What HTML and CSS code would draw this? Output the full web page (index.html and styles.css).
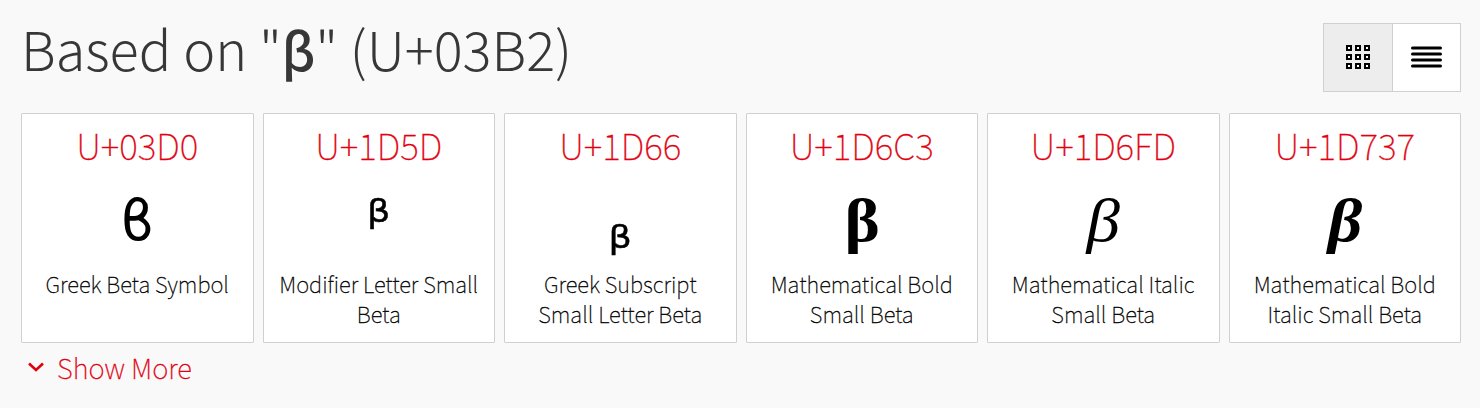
FILE: index.html
```html
<!doctype html>
<html lang="en">
<head>
<meta charset="utf-8">
<title>Based on "β" (U+03B2)</title>
  <link rel="stylesheet" href="styles.css">
</head>
<body>
  <section class="related">
    <header class="related-header">
      <h2>Based on "<b>β</b>" (U+03B2)</h2>
      <div class="view-switch">
        <a class="view active" href="#" aria-label="Grid">
          <svg width="24" height="24" viewBox="0 0 24 24" shape-rendering="crispEdges">
            <g fill="#fff" stroke="#000" stroke-width="2">
              <rect x="1" y="1" width="4" height="4"/>
              <rect x="10" y="1" width="4" height="4"/>
              <rect x="19" y="1" width="4" height="4"/>
              <rect x="1" y="10" width="4" height="4"/>
              <rect x="10" y="10" width="4" height="4"/>
              <rect x="19" y="10" width="4" height="4"/>
              <rect x="1" y="19" width="4" height="4"/>
              <rect x="10" y="19" width="4" height="4"/>
              <rect x="19" y="19" width="4" height="4"/>
            </g>
          </svg>
        </a>
        <a class="view" href="#" aria-label="List">
          <svg width="31" height="24" viewBox="0 0 31 24">
            <path d="M1.500 3h28M1.500 9h28M1.500 15h28M1.500 21h28" stroke="#000" stroke-width="3" stroke-linecap="round"/>
          </svg>
        </a>
      </div>
    </header>
    <ul class="cards">
      <li class="card">
        <a class="code" href="#">U+03D0</a>
        <span class="glyph">ϐ</span>
        <span class="name">Greek Beta Symbol</span>
      </li>
      <li class="card">
        <a class="code" href="#">U+1D5D</a>
        <span class="glyph small">ᵝ</span>
        <span class="name">Modifier Letter Small Beta</span>
      </li>
      <li class="card">
        <a class="code" href="#">U+1D66</a>
        <span class="glyph small sub">ᵦ</span>
        <span class="name">Greek Subscript Small Letter Beta</span>
      </li>
      <li class="card">
        <a class="code" href="#">U+1D6C3</a>
        <span class="glyph math bold">β</span>
        <span class="name">Mathematical Bold Small Beta</span>
      </li>
      <li class="card">
        <a class="code" href="#">U+1D6FD</a>
        <span class="glyph math italic">β</span>
        <span class="name">Mathematical Italic Small Beta</span>
      </li>
      <li class="card">
        <a class="code" href="#">U+1D737</a>
        <span class="glyph math bold italic">β</span>
        <span class="name">Mathematical Bold Italic Small Beta</span>
      </li>
    </ul>
    <a class="more" href="#">
      <svg width="16" height="10" viewBox="0 0 16 10">
        <path d="M1 1.500L8 8l7-6.500" fill="none" stroke="#e1000f" stroke-width="2.600"/>
      </svg>
      Show More
    </a>
  </section>
</body>
</html>
```
FILE: styles.css
```css
body {
  margin: 0;
  background: #f9f9f9;
  color: #000;
  font-family: 'Noto Sans CJK SC', 'Open Sans', sans-serif;
  font-weight: 100;
}
a {
  color: #e1000f;
  text-decoration: none;
}
.related {
  padding: 23px 19px 0 21px;
}
.related-header {
  display: flex;
  justify-content: space-between;
  height: 90px;
}
h2 {
  margin: 0;
  color: #373737;
  font-size: 54px;
  font-weight: 300;
  line-height: 50px;
  white-space: nowrap;
}
h2 b {
  font-size: 52px;
  font-weight: 500;
  line-height: 1;
}
.view-switch {
  display: flex;
  box-sizing: border-box;
  width: 138px;
  height: 69px;
  border: 1px solid #d0d0d0;
}
.view {
  display: flex;
  flex: 1;
  align-items: center;
  justify-content: center;
  padding-bottom: 2px;
  background: #fff;
}
.view.active {
  background: #ededed;
  border-right: 1px solid #d0d0d0;
}
.cards {
  display: grid;
  grid-template-columns: repeat(6, 1fr);
  gap: 9px;
  margin: 0;
  padding: 0;
  list-style: none;
}
.card {
  display: flex;
  flex-direction: column;
  box-sizing: border-box;
  height: 230px;
  padding: 8px 12px 0;
  background: #fff;
  border: 1px solid #d0d0d0;
  border-radius: 1px;
  text-align: center;
}
.code {
  font-size: 35.5px;
  line-height: 46px;
  -webkit-text-stroke: .3px;
}
.glyph {
  height: 100px;
  font-family: 'DejaVu Sans', sans-serif;
  font-size: 57px;
  font-weight: 400;
  line-height: 104px;
}
.glyph.small {
  font-size: 58px;
  line-height: 106px;
  -webkit-text-stroke: .5px;
}
.glyph.sub {
  line-height: 120px;
}
.glyph.math {
  font-family: 'Liberation Serif', serif;
  font-size: 61px;
  line-height: 105px;
  transform: scaleX(1.1);
}
.bold {
  font-weight: 700;
}
.italic {
  font-style: italic;
}
.name {
  font-size: 22px;
  line-height: 30px;
  -webkit-text-stroke: .3px;
}
.more {
  display: flex;
  align-items: center;
  gap: 13px;
  padding-left: 7px;
  font-size: 27.500px;
  line-height: 48px;
  -webkit-text-stroke: .3px;
}
```
